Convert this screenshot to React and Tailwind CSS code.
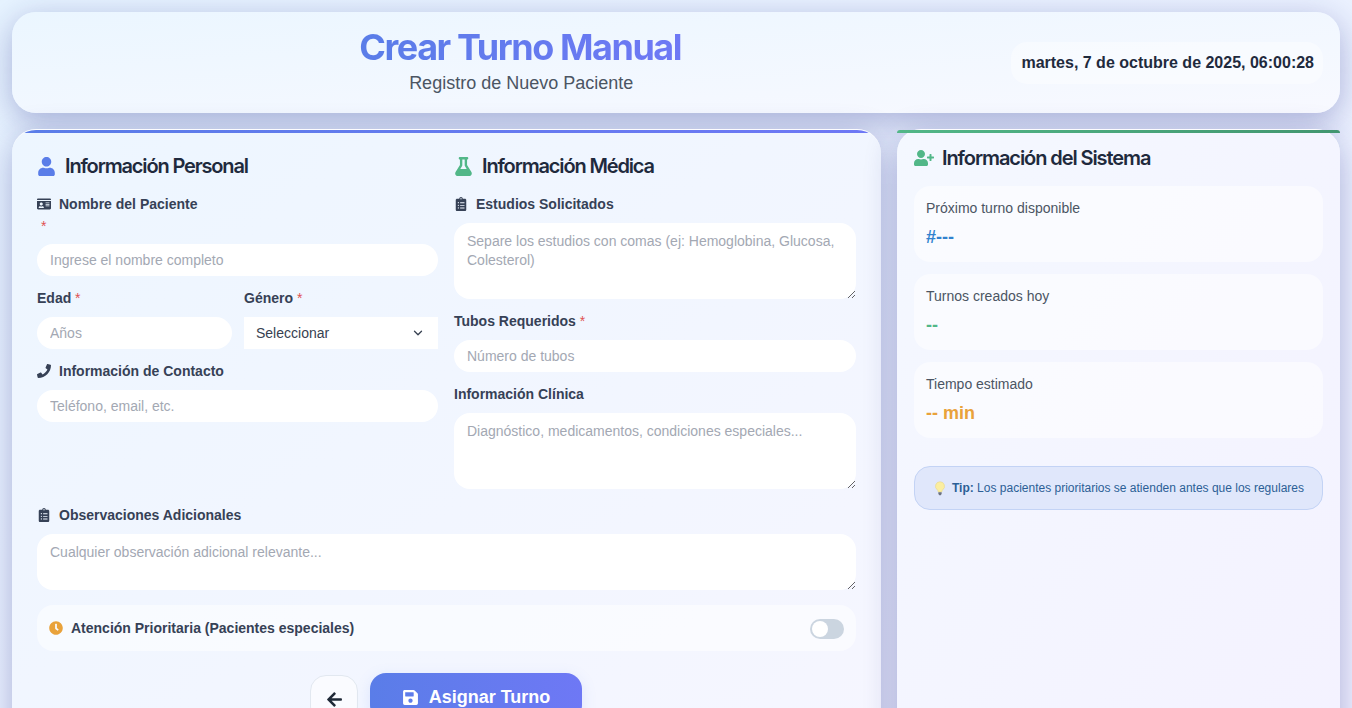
import { FaUser, FaFlask, FaIdCard, FaPhone, FaClipboardList, FaClock, FaUserPlus, FaSave, FaArrowLeft } from "react-icons/fa";
import { ChevronDown } from "lucide-react";

const inter = "font-['Inter',sans-serif]";
const fieldClass = "block w-full h-8 px-[13px] rounded-2xl bg-white text-sm text-[#374151] outline-none placeholder:text-[#a3a8b3]";
const areaClass = "block w-full px-[13px] pt-[9px] pb-2 rounded-2xl bg-white text-sm leading-[19px] text-[#374151] outline-none placeholder:text-[#a3a8b3]";

function Label({ icon: Icon, children, required }) {
    return (
        <label className="block h-[22px] mb-2 text-sm leading-[22px] font-bold text-[#364156]">
            {Icon && <Icon className="inline-block w-3.5 h-3.5 mr-2 align-[-2px] text-[#364156]" />}
            {children}
            {required && <span className="font-normal text-[#e05252]"> *</span>}
        </label>
    );
}

function SectionTitle({ icon: Icon, color, children }) {
    return (
        <h2 className={`flex items-center gap-[9px] h-[22px] mb-4 text-xl font-semibold tracking-[-1.15px] text-[#1f2a3d] ${inter}`}>
            <Icon className={`w-[19px] h-[19px] ${color}`} />
            {children}
        </h2>
    );
}

function Stat({ label, value, color }) {
    return (
        <div className="h-[76px] px-3 pt-[11px] rounded-2xl bg-white/50">
            <p className="text-sm leading-[22px] text-[#4b5563]">{label}</p>
            <p className={`mt-[7px] text-lg leading-[22px] font-bold ${color}`}>{value}</p>
        </div>
    );
}

export default function App() {
    return (
        <div className="h-screen overflow-hidden p-3 bg-gradient-to-br from-[#e6f3ff] to-[#f0f0ff] font-['Liberation_Sans',sans-serif]">
            <header className="flex items-center h-[101px] px-[17px] rounded-3xl bg-gradient-to-br from-[#ebf6ff] to-[#f8f9ff] shadow-[0_8px_32px_rgba(31,38,135,0.32)]">
                <div className="flex-1 pb-[3px] text-center">
                    <h1 className={`text-[36px] leading-[42px] font-bold tracking-[-1.45px] text-transparent bg-clip-text bg-gradient-to-r from-[#5a7de8] to-[#6e78f5] inline-block ${inter}`}>
                        Crear Turno Manual
                    </h1>
                    <p className="mt-0.5 pl-0.5 text-lg leading-[26px] text-[#4b5563]">Registro de Nuevo Paciente</p>
                </div>
                <div className="h-[42px] pl-[10px] pr-[9px] flex items-center rounded-2xl bg-white/40 text-base font-bold text-[#1f2a3d]">
                    martes, 7 de octubre de 2025, 06:00:28
                </div>
            </header>

            <main className="grid grid-cols-[869px_443px] gap-4 mt-4">
                <section className="relative h-[640px] overflow-hidden px-[25px] pt-[25px] rounded-3xl border-t border-white/80 bg-gradient-to-br from-[#edf6ff] to-[#f6f6ff] shadow-[0_8px_32px_rgba(31,38,135,0.32)]">
                    <div className="absolute inset-x-0 top-0 h-[3px] bg-gradient-to-r from-[#5a7de8] to-[#6e78f5]" />
                    <div className="grid grid-cols-[401px_402px] gap-4 h-[334px]">
                        <div>
                            <SectionTitle icon={FaUser} color="text-[#5a7de8]">Información Personal</SectionTitle>
                            <div className="mb-[11px]">
                                <Label icon={FaIdCard}>Nombre del Paciente</Label>
                                <div className="-mt-2 h-[21px] mb-2 pl-1 text-sm leading-[22px] text-[#e05252]">*</div>
                                <input className={fieldClass} placeholder="Ingrese el nombre completo" />
                            </div>
                            <div className="grid grid-cols-[195px_194px] gap-3 mb-[11px]">
                                <div>
                                    <Label required>Edad</Label>
                                    <input className={fieldClass} placeholder="Años" />
                                </div>
                                <div>
                                    <Label required>Género</Label>
                                    <div className="relative">
                                        <select className="block w-full h-8 pl-3 bg-white text-sm text-[#374151] appearance-none outline-none">
                                            <option>Seleccionar</option>
                                        </select>
                                        <ChevronDown className="absolute right-[13px] top-[9px] w-[14px] h-[14px] text-[#374151] pointer-events-none" strokeWidth={2.2} />
                                    </div>
                                </div>
                            </div>
                            <div>
                                <Label icon={FaPhone}>Información de Contacto</Label>
                                <input className={fieldClass} placeholder="Teléfono, email, etc." />
                            </div>
                        </div>
                        <div>
                            <SectionTitle icon={FaFlask} color="text-[#52b788]">Información Médica</SectionTitle>
                            <div className="mb-[11px]">
                                <Label icon={FaClipboardList}>Estudios Solicitados</Label>
                                <textarea className={`${areaClass} h-[76px]`} placeholder="Separe los estudios con comas (ej: Hemoglobina, Glucosa, Colesterol)" />
                            </div>
                            <div className="mb-[11px]">
                                <Label required>Tubos Requeridos</Label>
                                <input className={fieldClass} placeholder="Número de tubos" />
                            </div>
                            <div>
                                <Label>Información Clínica</Label>
                                <textarea className={`${areaClass} h-[76px]`} placeholder="Diagnóstico, medicamentos, condiciones especiales..." />
                            </div>
                        </div>
                    </div>

                    <div className="mt-[15px]">
                        <Label icon={FaClipboardList}>Observaciones Adicionales</Label>
                        <textarea className={`${areaClass} h-14`} placeholder="Cualquier observación adicional relevante..." />
                    </div>

                    <div className="flex items-center justify-between h-[46px] mt-[15px] px-3 rounded-2xl bg-white/50">
                        <span className="flex items-center gap-2 text-sm font-bold text-[#364156]">
                            <FaClock className="w-3.5 h-3.5 text-[#e9a23b]" />
                            Atención Prioritaria (Pacientes especiales)
                        </span>
                        <button type="button" className="flex items-center w-[34px] h-5 mt-0.5 px-0.5 rounded-full bg-[#cbd5e0]">
                            <span className="w-4 h-4 rounded-full bg-white" />
                        </button>
                    </div>

                    <div className="flex justify-center items-start gap-3 mt-[22px] pr-px">
                        <button type="button" className="flex items-center justify-center w-12 h-12 mt-0.5 rounded-2xl border border-[#e2e8f0] bg-white/60 text-[#1f2937]">
                            <FaArrowLeft className="w-[17px] h-[17px]" />
                        </button>
                        <button type="button" className="flex items-center justify-center gap-2.5 w-[212px] h-12 rounded-2xl bg-gradient-to-r from-[#5a7de8] to-[#6e78f5] text-lg font-bold text-white shadow-[0_4px_15px_rgba(90,125,232,0.15)]">
                            <FaSave className="w-[17px] h-[17px]" />
                            Asignar Turno
                        </button>
                    </div>
                </section>

                <aside className="relative h-[640px] px-[17px] pt-[17px] rounded-3xl border-t border-white/80 bg-gradient-to-br from-[#f4f8ff] to-[#f4f2ff] shadow-[0_8px_32px_rgba(31,38,135,0.32)]">
                    <div className="absolute inset-x-0 top-0 h-[3px] rounded-t-sm bg-gradient-to-r from-[#52b788] to-[#429670]" />
                    <h2 className={`flex items-center gap-2 h-[22px] mb-[17px] text-xl font-semibold tracking-[-1.08px] text-[#1f2a3d] ${inter}`}>
                        <FaUserPlus className="w-5 h-4 text-[#52b788]" />
                        Información del Sistema
                    </h2>
                    <div className="grid gap-3">
                        <Stat label="Próximo turno disponible" value="#---" color="text-[#3182ce]" />
                        <Stat label="Turnos creados hoy" value="--" color="text-[#52b788]" />
                        <Stat label="Tiempo estimado" value="-- min" color="text-[#e9a23b]" />
                    </div>
                    <div className="flex items-center justify-center gap-1.5 h-[44px] mt-7 pl-px rounded-2xl border border-[#c3d3f5] bg-[#e0e7fb] text-xs text-[#2c5f96]">
                        <svg viewBox="0 0 16 20" className="w-3 h-[15px]">
                            <path d="M8 1a6 6 0 0 0-3.6 10.8c.9.8 1.1 1.6 1.2 2.7h4.8c.1-1.100.3-1.900 1.200-2.700A6 6 0 0 0 8 1z" fill="#fbeea0" stroke="#e8d68a" strokeWidth="0.8" />
                            <path d="M5.800 15h4.400v2.200l-1.300 1.800H7.100l-1.300-1.800z" fill="#6b7280" />
                        </svg>
                        <span><b>Tip:</b> Los pacientes prioritarios se atienden antes que los regulares</span>
                    </div>
                </aside>
            </main>
        </div>
    );
}
